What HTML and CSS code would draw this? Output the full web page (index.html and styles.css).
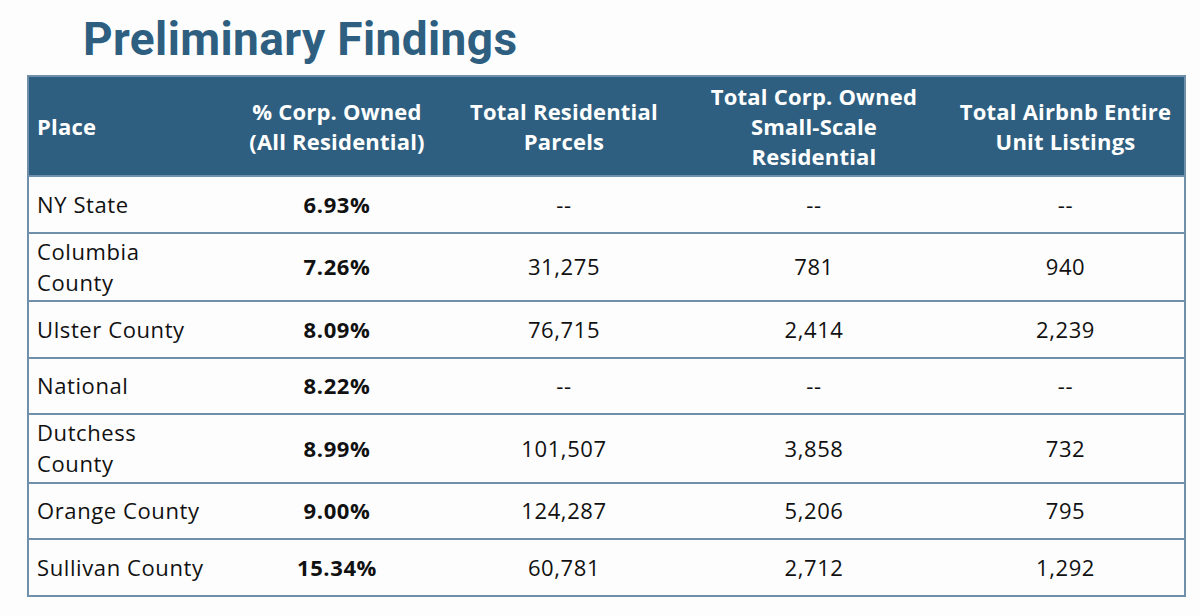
FILE: index.html
```html
<!DOCTYPE html>
<html lang="en">
<head>
<meta charset="utf-8">
<title>Preliminary Findings</title>
<link rel="stylesheet" href="styles.css">
</head>
<body>
<main class="slide">
  <h1 class="title">Preliminary Findings</h1>
  <table class="findings">
    <colgroup>
      <col class="c1"><col class="c2"><col class="c3"><col class="c4"><col class="c5">
    </colgroup>
    <thead>
      <tr>
        <th class="place">Place</th>
        <th>% Corp. Owned<br>(All Residential)</th>
        <th>Total Residential<br>Parcels</th>
        <th>Total Corp. Owned<br>Small-Scale<br>Residential</th>
        <th>Total Airbnb Entire<br>Unit Listings</th>
      </tr>
    </thead>
    <tbody>
      <tr class="r1"><td class="place">NY State</td><td class="pct">6.93%</td><td>--</td><td>--</td><td>--</td></tr>
      <tr class="r2"><td class="place">Columbia<br>County</td><td class="pct">7.26%</td><td>31,275</td><td>781</td><td>940</td></tr>
      <tr class="r1"><td class="place">Ulster County</td><td class="pct">8.09%</td><td>76,715</td><td>2,414</td><td>2,239</td></tr>
      <tr class="r1"><td class="place">National</td><td class="pct">8.22%</td><td>--</td><td>--</td><td>--</td></tr>
      <tr class="r2"><td class="place">Dutchess<br>County</td><td class="pct">8.99%</td><td>101,507</td><td>3,858</td><td>732</td></tr>
      <tr class="r1"><td class="place">Orange County</td><td class="pct">9.00%</td><td>124,287</td><td>5,206</td><td>795</td></tr>
      <tr class="r1"><td class="place">Sullivan County</td><td class="pct">15.34%</td><td>60,781</td><td>2,712</td><td>1,292</td></tr>
    </tbody>
  </table>
</main>
</body>
</html>
```

FILE: styles.css
```css
html, body {
  margin: 0;
  padding: 0;
  background: #fdfdfd;
}

.slide {
  width: 1200px;
  height: 616px;
  overflow: hidden;
  padding-top: 12px;
  box-sizing: border-box;
}

.title {
  margin: 0 0 0 83px;
  font-family: Roboto, "Liberation Sans", sans-serif;
  font-weight: 700;
  font-size: 46px;
  line-height: 54px;
  height: 63px;
  color: #2e5f80;
  letter-spacing: 0.4px;
}

.findings {
  margin-left: 27px;
  width: 1157px;
  border-collapse: collapse;
  table-layout: fixed;
  border: 2px solid #6f8fab;
  font-family: "Open Sans", "Liberation Sans", sans-serif;
  font-size: 22px;
  letter-spacing: 0.6px;
  color: #111;
  background: #fdfdfd;
}

.c1 { width: 199px; }
.c2 { width: 220px; }
.c3 { width: 234px; }
.c4 { width: 266px; }
.c5 { width: 238px; }

.findings th {
  background: #2e5f80;
  color: #ffffff;
  font-weight: 700;
  letter-spacing: 0.2px;
  line-height: 30px;
  height: 98px;
  padding: 0;
  text-align: center;
  vertical-align: middle;
}

.findings td {
  border-top: 2px solid #6f8fab;
  padding: 0;
  line-height: 31px;
  text-align: center;
  vertical-align: middle;
}

.findings .place {
  text-align: left;
  padding-left: 8px;
}

.findings .pct {
  font-weight: 700;
}

.r1 td { height: 54.5px; }
.r2 td { height: 66.5px; }
```
